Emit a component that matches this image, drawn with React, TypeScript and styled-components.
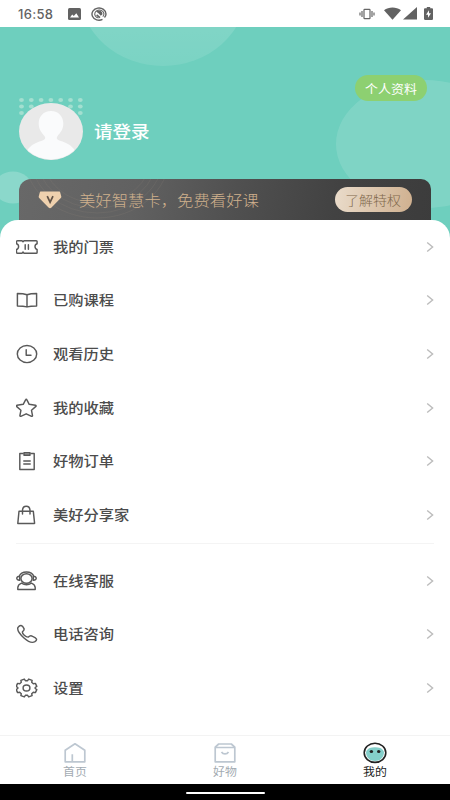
import React from 'react';
import styled, { createGlobalStyle } from 'styled-components';

const GlobalStyle = createGlobalStyle`
  * { box-sizing: border-box; }
  body { margin: 0; background: #fff; font-family: Roboto, "Noto Sans CJK SC", sans-serif; }
`;

const Screen = styled.div`
  width: 450px;
  height: 800px;
  display: flex;
  flex-direction: column;
  overflow: hidden;
  background: #fff;
`;

const StatusBar = styled.header`
  height: 27px;
  flex: none;
  display: flex;
  align-items: center;
  justify-content: space-between;
  padding: 0 17px 0 18px;
  color: #626262;
`;

const StatusGroup = styled.div<{ $gap: number }>`
  display: flex;
  align-items: center;
  gap: ${(p) => p.$gap}px;
`;

const Clock = styled.span`
  font: 500 13px/16px Inter, sans-serif;
  letter-spacing: 0.3px;
  width: 36px;
  margin-right: 4px;
  white-space: nowrap;
`;

const WifiIcon = styled.svg`
  margin-left: 7px;
`;

const BatteryIcon = styled.svg`
  margin-left: 5px;
`;

const Hero = styled.section`
  position: relative;
  height: 212px;
  flex: none;
  background: #6ecfbe;
  padding: 48px 19px 0;
`;

const HeroArt = styled.svg`
  position: absolute;
  inset: 0;
`;

const ProfileBar = styled.div`
  position: relative;
  display: flex;
  justify-content: flex-end;
  padding-right: 4px;
  height: 28px;
`;

const ProfileButton = styled.button`
  width: 72px;
  height: 26px;
  padding: 0;
  border: 0;
  border-radius: 13px;
  background: #8dd071;
  color: #fff;
  font: 400 12px/25px "Noto Sans CJK SC", sans-serif;
`;

const Stretch = styled.span<{ $x: number; $center?: boolean }>`
  display: inline-block;
  white-space: nowrap;
  transform: scaleX(${(p) => p.$x});
  transform-origin: ${(p) => (p.$center ? 'center' : 'left')};
`;

const Account = styled.div`
  position: relative;
  display: flex;
  align-items: center;
  gap: 11px;
  height: 57px;
`;

const Login = styled.span`
  color: #fff;
  font: 500 17px/24px "Noto Sans CJK SC", sans-serif;
  padding-bottom: 2px;
`;

const Card = styled.div`
  position: relative;
  display: flex;
  align-items: center;
  width: 412px;
  height: 60px;
  margin-top: 19px;
  padding: 0 19px 19px;
  border-radius: 12px 10px 0 0;
  background: linear-gradient(100deg, #686868 0%, #616161 28%, #505050 52%, #424242 76%, #3c3c3c 100%);
`;

const CardLines = styled.svg`
  position: absolute;
  left: 0;
  top: 0;
`;

const CardBadge = styled.svg`
  position: relative;
`;

const CardText = styled.span`
  position: relative;
  flex: 1;
  margin-left: 17px;
  color: #d0b18d;
  font: 300 15px/22px "Noto Sans CJK SC", sans-serif;
`;

const CardButton = styled.button`
  position: relative;
  width: 77px;
  height: 25px;
  padding: 0;
  border: 0;
  border-radius: 13px;
  background: linear-gradient(100deg, #eadccb, #cfb08f);
  color: #80684c;
  font: 300 13px/24px "Noto Sans CJK SC", sans-serif;
`;

const Sheet = styled.main`
  position: relative;
  flex: 1;
  min-height: 0;
  margin-top: -19px;
  border-radius: 18px 18px 0 0;
  background: #fff;
`;

const Group = styled.ul<{ $divided?: boolean }>`
  list-style: none;
  margin: 0 16px;
  padding: ${(p) => (p.$divided ? '10px 0 0' : '0 0 1px')};
  border-top: ${(p) => (p.$divided ? '1px solid #f4f4f4' : '0')};
`;

const Row = styled.li`
  display: flex;
  align-items: center;
  height: 53.65px;
  color: #4c4c4c;
`;

const RowIcon = styled.svg`
  width: 22px;
  height: 20px;
  margin-right: 15px;
  fill: none;
  stroke: #595959;
  stroke-width: 1.45;
  stroke-linecap: round;
  stroke-linejoin: round;
`;

const RowLabel = styled.span`
  flex: 1;
  padding-bottom: 2px;
  font: 500 14px/20px "Noto Sans CJK SC", sans-serif;
`;

const Chevron = styled.svg`
  fill: none;
  stroke: #bcbcbc;
  stroke-width: 1.4;
`;

const Tabs = styled.nav`
  flex: none;
  height: 49px;
  display: grid;
  grid-template-columns: repeat(3, 1fr);
  border-top: 1px solid #f3f3f3;
  background: #fff;
`;

const Tab = styled.div<{ $active?: boolean }>`
  display: flex;
  flex-direction: column;
  align-items: center;
  padding-top: 6px;
  color: ${(p) => (p.$active ? '#222' : '#a3abb2')};
  font: 400 11px/15px "Noto Sans CJK SC", sans-serif;
`;

const TabIcon = styled.svg`
  width: 24px;
  height: 22px;
  fill: none;
  stroke: #bdc7d1;
  stroke-width: 1.7;
  stroke-linejoin: round;
`;

const SystemNav = styled.footer`
  flex: none;
  height: 16px;
  background: #000;
  display: flex;
  justify-content: center;
  padding-top: 7.5px;
`;

const HomeHandle = styled.div`
  width: 79px;
  height: 2.5px;
  border-radius: 2px;
  background: #fff;
`;

const icons: Record<string, React.ReactNode> = {
  ticket: (
    <>
      <path d="M1.8 3.7H6l1 1.100 1-1.100h12.200c.6 0 .9.300.9.800v2.200c-2.800.700-2.800 5.100 0 5.800v2.900c0 .500-.3.800-.9.800H8l-1-1.100-1 1.100H1.400c-.6 0-.9-.3-.9-.8v-2.900c2.800-.7 2.800-5.100 0-5.800V4.500c0-.5.400-.8 1.300-.8Z" />
      <path d="M9.200 7.700v4.500M12.400 7.700v4.500" />
    </>
  ),
  book: <path d="M11 4.800C8 3.700 5 3.500 1.400 3.500v12.400c3.600 0 6.600.1 9.600 1 3-.9 6-1 9.600-1V3.500c-3.600 0-6.600.2-9.600 1.300v12.100" />,
  clock: (
    <>
      <ellipse cx="11" cy="10" rx="9.700" ry="8.600" />
      <path d="M10.200 5.800v5.400H15" />
    </>
  ),
  star: <path d="M9.700 1.600c.2-.5.900-.5 1.100 0l2.400 4.700 6.200 1c.7.100.9.700.5 1.100l-4.400 3.900 1 5.300c.1.600-.4.900-.9.700l-5.400-2.500-5.400 2.500c-.5.200-1-.1-.9-.7l1-5.300-4.400-3.900c-.4-.4-.2-1 .5-1.100l6.200-1Z" />,
  order: (
    <>
      <path d="M7 2.500H3.800v16h14.400v-16H15M7.800 10h6.400M7.800 13h6.400" />
      <path d="M8 1.600h6v2.600H8Z" fill="#999" />
    </>
  ),
  bag: (
    <>
      <path d="M3 6.200h14.300l1.300 12.200H1.800Z" />
      <path d="M6.500 9V5.800c0-6 7.500-6 7.500 0V9" />
    </>
  ),
  service: (
    <>
      <ellipse cx="10.500" cy="7.500" rx="5.600" ry="4.800" />
      <path d="M3.200 5.300C5.300-.4 15.700-.4 17.800 5.300M3.700 5.300C-.2 5-.2 9.500 3.700 9.200ZM17.300 5.300c3.900-.3 3.900 4.200 0 3.900ZM5.500 12.100c-2 .8-3.500 2-3.700 4.400v1.900h17.400v-1.900c-.2-2.400-1.700-3.600-3.700-4.400-3 2-7 2-10 0Z" />
    </>
  ),
  phone: <path d="M2 3.400c2-2.800 4.200-2.700 6 1.200.5 1.500-.3 2.200-1.500 3.100-.7 2 3.400 5.700 5.900 5.400 1.500-1.700 2.600-1.700 4.200-.8 4.500 1.900 5 3.600 2.300 5.400-2.500 1.500-6.500.2-10.900-3.700C3.500 9.900.7 6.300 2 3.400Z" />,
  gear: (
    <>
      <ellipse cx="10.500" cy="10" rx="3.400" ry="3" />
      <path d="M8.300 1.100 9.400 2.700h2.200l1.100-1.600 3.400 1.300-.4 1.900 1.600 1.400 2.100-.3 1.400 3-1.600 1.100v1l1.600 1.100-1.400 3-2.100-.3-1.600 1.400.4 1.900-3.400 1.300-1.100-1.600H9.400l-1.100 1.600-3.400-1.300.4-1.900-1.600-1.400-2.100.3-1.400-3 1.600-1.100v-1L.2 8.400l1.400-3 2.100.3 1.600-1.400-.4-1.900Z" />
    </>
  ),
};

const primaryRows = [
  ['ticket', '我的门票'],
  ['book', '已购课程'],
  ['clock', '观看历史'],
  ['star', '我的收藏'],
  ['order', '好物订单'],
  ['bag', '美好分享家'],
];
const supportRows = [
  ['service', '在线客服'],
  ['phone', '电话咨询'],
  ['gear', '设置'],
];

const MenuRow = ({ icon, label }: { icon: string; label: string }) => (
  <Row>
    <RowIcon viewBox="0 0 22 20">{icons[icon]}</RowIcon>
    <RowLabel>
      <Stretch $x={1.09}>{label}</Stretch>
    </RowLabel>
    <Chevron width="8" height="12" viewBox="0 0 8 12">
      <path d="M1.200 1.500 6.600 6l-5.400 4.500" />
    </Chevron>
  </Row>
);

const dots = Array.from({ length: 21 }, (_, i) => ({ x: 21.5 + (i % 7) * 9.8, y: 73 + Math.floor(i / 7) * 6.5 }));

export default function App() {
  return (
    <>
      <GlobalStyle />
      <Screen>
        <StatusBar>
          <StatusGroup $gap={10}>
            <Clock>16:58</Clock>
            <svg width="13" height="12" viewBox="0 0 13 12">
              <rect width="13" height="12" rx="1.500" fill="#626262" />
              <path d="M2 9.500 4.200 6.500 5.800 8l2.500-2.700L11 9.500Z" fill="#fff" />
            </svg>
            <svg width="16" height="14" viewBox="0 0 16 14" fill="none" stroke="#626262">
              <path d="M11.500 12.400A7 6.100 0 1 1 15 7c0 1.800-.8 2.800-1.500 3.500" strokeWidth="1.400" />
              <path d="M11.800 9.700A4.600 4 0 1 0 7.500 11" strokeWidth="1.100" />
              <path d="M5 4.500c3-2 6.500-.4 6.500 2.700L9.800 8.800 7.400 6.200Z" fill="#626262" stroke="none" />
              <path d="m5.600 8 3.400 2.700" strokeWidth="1.600" />
            </svg>
          </StatusGroup>
          <StatusGroup $gap={2}>
            <svg width="16" height="12" viewBox="0 0 16 12" fill="none" stroke="#666" strokeWidth="1.200">
              <rect x="5" y="1.300" width="6" height="9.400" rx=".6" />
              <path d="M3 3v6M13 3v6M1 4.500v3M15 4.500v3" />
            </svg>
            <WifiIcon width="17" height="13" viewBox="0 0 17 13">
              <path d="M0 3.200C4.700-.5 12.300-.5 17 3.200L8.500 12.800Z" fill="#626262" />
            </WifiIcon>
            <svg width="14" height="13" viewBox="0 0 14 13">
              <path d="M14 0v12.500H0Z" fill="#626262" />
            </svg>
            <BatteryIcon width="9" height="13" viewBox="0 0 9 13">
              <path d="M2.800 0h3.400v1.300H8c.6 0 1 .3 1 .8v10c0 .5-.4.9-1 .9H1c-.6 0-1-.4-1-.9v-10c0-.5.400-.8 1-.8h1.800Z" fill="#626262" />
              <path d="M5 3.200 2 7.700h2v3L7 6.300H5Z" fill="#fff" />
            </BatteryIcon>
          </StatusGroup>
        </StatusBar>

        <Hero>
          <HeroArt width="450" height="212" viewBox="0 0 450 212">
            <defs>
              <linearGradient id="bubble" x1="0" y1="0" x2="0" y2="1">
                <stop offset=".45" stopColor="#fff" stopOpacity=".17" />
                <stop offset="1" stopColor="#fff" stopOpacity=".09" />
              </linearGradient>
            </defs>
            <ellipse cx="163" cy="-35" rx="83" ry="74" fill="url(#bubble)" />
            <ellipse cx="424" cy="117" rx="88" ry="64" fill="#fff" fillOpacity=".12" />
            <ellipse cx="13" cy="160.500" rx="19" ry="16" fill="#fff" fillOpacity=".2" />
            {dots.map((d) => (
              <ellipse key={`${d.x}-${d.y}`} cx={d.x} cy={d.y} rx="2.400" ry="2" fill="#a3dfd0" />
            ))}
          </HeroArt>
          <ProfileBar>
            <ProfileButton>
              <Stretch $x={1.08} $center>个人资料</Stretch>
            </ProfileButton>
          </ProfileBar>
          <Account>
            <svg width="64" height="57" viewBox="0 0 64 57">
              <defs>
                <clipPath id="avatar">
                  <ellipse cx="32" cy="28.500" rx="31.400" ry="28" />
                </clipPath>
              </defs>
              <ellipse cx="32" cy="28.500" rx="32" ry="28.500" fill="#e9e9e9" />
              <path
                clipPath="url(#avatar)"
                d="M32 8c-7.500 0-12.300 5.500-12.300 12.500 0 6.200 3.300 9.500 5.700 12.500 1.600 2.400.8 3.600-2.400 4.700C16 39.500 11 43 8.500 47v10h47V47c-2.500-4-7.500-7.500-14.500-9.300-3.200-1.100-4-2.300-2.400-4.700 2.400-3 5.700-6.300 5.700-12.500C44.300 13.500 39.500 8 32 8Z"
                fill="#fafbfc"
              />
            </svg>
            <Login>
              <Stretch $x={1.09}>请登录</Stretch>
            </Login>
          </Account>
          <Card>
            <CardLines width="150" height="42" viewBox="0 0 150 42" fill="none" stroke="#8a8178" strokeOpacity=".35" strokeWidth=".6">
              <ellipse cx="78" cy="-22" rx="54" ry="46" />
              <ellipse cx="78" cy="-22" rx="60" ry="51" />
              <ellipse cx="78" cy="-22" rx="66" ry="56" />
              <ellipse cx="78" cy="-22" rx="72" ry="61" />
            </CardLines>
            <CardBadge width="24" height="18" viewBox="0 0 24 18">
              <path d="M3 .5h18c.8 0 1 .4 1.200 1l1.100 4c.1.700 0 1-.5 1.500L13.500 16.600c-1 1-2 1-3 0L1.200 7C.7 6.500.6 6.200.7 5.500l1.100-4c.2-.6.400-1 1.200-1Z" fill="#efd1ae" />
              <path d="m9.200 5.200 2.900 6 2.900-6" fill="none" stroke="#625448" strokeWidth="1.700" />
            </CardBadge>
            <CardText>
              <Stretch $x={1.09}>美好智慧卡，免费看好课</Stretch>
            </CardText>
            <CardButton>
              <Stretch $x={1.07} $center>了解特权</Stretch>
            </CardButton>
          </Card>
        </Hero>

        <Sheet>
          <Group>
            {primaryRows.map(([icon, label]) => (
              <MenuRow key={icon} icon={icon} label={label} />
            ))}
          </Group>
          <Group $divided>
            {supportRows.map(([icon, label]) => (
              <MenuRow key={icon} icon={icon} label={label} />
            ))}
          </Group>
        </Sheet>

        <Tabs>
          <Tab>
            <TabIcon viewBox="0 0 24 22">
              <path d="M2.200 8.300 12 1.800l9.800 6.500v11.500H2.200ZM9.300 19.500v-7.200" />
            </TabIcon>
            <Stretch $x={1.08} $center>首页</Stretch>
          </Tab>
          <Tab>
            <TabIcon viewBox="0 0 24 22">
              <path d="M2.200 5.200 5.700 2h12.600l3.500 3.200v14.600H2.200ZM2.200 5.500h19.600M8.500 10c1.600 2.600 5.400 2.600 7 0" />
            </TabIcon>
            <Stretch $x={1.08} $center>好物</Stretch>
          </Tab>
          <Tab $active>
            <TabIcon viewBox="0 0 24 22">
              <ellipse cx="12" cy="10.800" rx="10.800" ry="9.600" fill="#fff" stroke="#222" strokeWidth="1.600" />
              <path d="M3 10c.7-1.700 1.800-3 3.600-3.900 3-1.100 7.800-1.100 10.800 0C19.200 7 20.300 8.300 21 10c0 5.600-4 9-9 9s-9-3.400-9-9Z" fill="#84cfca" stroke="none" />
              <ellipse cx="8.400" cy="9.400" rx="1.700" ry="1.500" fill="#222" stroke="none" />
              <ellipse cx="15.700" cy="9.400" rx="1.700" ry="1.500" fill="#222" stroke="none" />
            </TabIcon>
            <Stretch $x={1.08} $center>我的</Stretch>
          </Tab>
        </Tabs>
        <SystemNav>
          <HomeHandle />
        </SystemNav>
      </Screen>
    </>
  );
}
